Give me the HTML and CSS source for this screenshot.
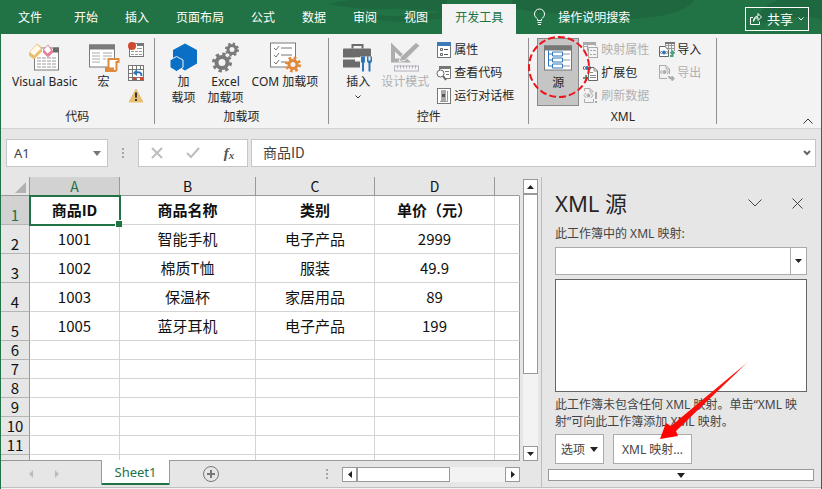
FILE: index.html
```html
<!DOCTYPE html>
<html lang="zh-CN">
<head>
<meta charset="utf-8">
<title>Excel - XML 源</title>
<link rel="stylesheet" href="styles.css">
</head>
<body>
<div class="app">
  <header class="topbar">
    <svg class="topbar-art" width="600" height="34" viewBox="0 0 600 34" aria-hidden="true">
      <g fill="#1d603b" opacity=".6">
        <path d="M106 4Q130 -2 150 0H225V12Q185 8 165 9Q135 10 106 4Z"/>
        <path d="M138 10Q160 20 200 14L222 12V18Q180 24 160 20Q145 18 138 10Z"/>
        <path d="M290 0H472Q462 15 420 18Q400 20 375 14Q330 16 290 8Z"/>
        <path d="M536 24Q536 6 556 0H600V20Q580 12 536 24Z"/>
      </g>
    </svg>
    <nav class="tabs">
      <a class="tab file" href="#">文件</a>
      <a class="tab" href="#">开始</a>
      <a class="tab" href="#">插入</a>
      <a class="tab" href="#">页面布局</a>
      <a class="tab" href="#">公式</a>
      <a class="tab" href="#">数据</a>
      <a class="tab" href="#">审阅</a>
      <a class="tab" href="#">视图</a>
      <a class="tab active" href="#">开发工具</a>
    </nav>
    <button class="tell-me">
      <svg width="13" height="18" viewBox="0 0 13 18" fill="none" stroke="#fff"><path d="M4.500 12.500V11C3 9.500 1.500 8.500 1.500 6A5 5 0 0 1 11.500 6C11.500 8.500 10 9.500 8.500 11V12.500ZM4.500 14.500H8.500M5 16.500H8"/></svg>
      操作说明搜索
    </button>
    <button class="share">
      <svg width="12" height="12" viewBox="0 0 12 12" fill="none" stroke="#fff"><path d="M3 4.500H.5V11.500H9.500V8.500M3.500 8.500Q4 4.500 8 4.500V7.500L11.500 4L8 .5V3Q3.500 3.500 3.500 8.500Z"/></svg>
      共享
      <svg width="6" height="4" viewBox="0 0 6 4" fill="none" stroke="#fff"><path d="M.5 .5L3 3L5.500 .5"/></svg>
    </button>
  </header>

  <section class="ribbon">
    <div class="group g-code">
      <div class="tools">
        <button class="big vb">
          <svg width="32" height="28" viewBox="0 0 32 28">
            <rect x="5.500" y="4.500" width="24" height="22" fill="#fff" stroke="#7b7b7b"/><path d="M24 4H30V9H24Z" fill="#6b6b6b"/>
            <path d="M8 14.500H27M8 17.500H27M8 20.500H27M8 23.500H27" stroke="#999" stroke-dasharray="4 1"/>
            <path d="M0 9L8 0L13 4V8L5 16L0 12Z" fill="#e9bf6b"/><path d="M1 8.500L8 1L12 5L5 12Z" fill="#fffaf0"/>
            <path d="M14 6L19 1L24 7V9L19 14L14 9Z" fill="#e6819b"/><path d="M15 6L19 2L22 7L18.500 10Z" fill="#fff"/>
          </svg>
          <span>Visual Basic</span>
        </button>
        <button class="big">
          <svg width="32" height="28" viewBox="0 0 32 28">
            <rect x="1.500" y="1.500" width="25" height="22" fill="#fff" stroke="#7b7b7b"/><path d="M1 1H27V6H1Z" fill="#7b7b7b"/>
            <path d="M4 9.500H12M15 9.500H24M4 12.500H12M15 12.500H24M4 15.500H12M15 15.500H18M4 18.500H12" stroke="#aaa"/>
            <path d="M20.500 15.500H30.500V18.500H28.500V26Q28 28 26 27.500H18V24.500H20.500Z" fill="#fff" stroke="#e08a3c" stroke-width="2"/><path d="M17 24H26V28H18Z" fill="#e08a3c"/>
          </svg>
          <span>宏</span>
        </button>
        <div class="small-stack">
          <button class="small" aria-label="录制宏"><svg width="16" height="16" viewBox="0 0 16 16"><rect x="1.500" y="1.500" width="14" height="13" fill="#fff" stroke="#777"/><path d="M9 1H16V4H9Z" fill="#777"/><path d="M3 9.500H6M7 9.500H10M11 9.500H14M3 12.500H6M7 12.500H10M11 12.500H14M9 6.500H14" stroke="#999"/><circle cx="4" cy="4" r="4" fill="#d1492e"/></svg></button>
          <button class="small" aria-label="使用相对引用"><svg width="16" height="16" viewBox="0 0 16 16"><rect x=".5" y=".5" width="15" height="15" fill="#fff" stroke="#777"/><path d="M0 4.500H16M4.500 0V16M8.500 0V4M12.500 0V4M0 8.500H4M0 12.500H16M8.500 12V16" stroke="#777"/><path d="M5 5H15V12H5Z" fill="#fff"/><path d="M13.500 11Q14 6 7 7.500" fill="none" stroke="#2f73b5" stroke-width="2"/><path d="M5 8L9 4V11Z" fill="#2f73b5"/><path d="M5 12H8V15H5ZM12 12H15V15H12Z" fill="#d1492e"/></svg></button>
          <button class="small" aria-label="宏安全性"><svg width="16" height="16" viewBox="0 0 16 16"><path d="M8 1L15 14H1Z" fill="#e9bf74" stroke="#e9bf74" stroke-linejoin="round"/><path d="M8 4.500V9.500M8 11V13" stroke="#333" stroke-width="2"/></svg></button>
        </div>
      </div>
      <h2>代码</h2>
    </div>

    <div class="group g-addins">
      <div class="tools">
        <button class="big addin">
          <svg width="28" height="28" viewBox="0 0 28 28"><path d="M15 0L27 6.500V20L15 27L3 20V6.500Z" fill="#0a70c6"/><path d="M6.500 13L13 16.500V24L6.500 28L0 24V16.500Z" fill="#0a70c6" stroke="#f3f3f3"/></svg>
          <span>加<br>载项</span>
        </button>
        <button class="big">
          <svg width="28" height="30" viewBox="0 0 28 30" fill="none" stroke="#7a7a7a"><circle cx="10" cy="20" r="5.500" stroke-width="4"/><circle cx="10" cy="20" r="8.500" stroke-width="3" stroke-dasharray="3.340 3.340"/><circle cx="20" cy="7" r="4" stroke-width="3"/><circle cx="20" cy="7" r="6" stroke-width="2" stroke-dasharray="2.360 2.360"/></svg>
          <span>Excel<br>加载项</span>
        </button>
        <button class="big">
          <svg width="32" height="30" viewBox="0 0 32 30" fill="none"><rect x="1.500" y=".5" width="25" height="24" fill="#fff" stroke="#7b7b7b"/><path d="M5 5.500L7 7.500L10 3.500M5 12.500L7 14.500L10 10.500M5 19.500L7 21.500L10 17.500M12 5.500H23M12 12.500H23M12 19.500H17" stroke="#777"/><circle cx="24" cy="22" r="7" fill="#f3f3f3"/><circle cx="24" cy="22" r="4" stroke="#e0883b" stroke-width="3"/><circle cx="24" cy="22" r="6.500" stroke="#e0883b" stroke-width="3" stroke-dasharray="2.550 2.550"/></svg>
          <span>COM 加载项</span>
        </button>
      </div>
      <h2>加载项</h2>
    </div>

    <div class="group g-controls">
      <div class="tools">
        <button class="big">
          <svg width="32" height="30" viewBox="0 0 32 30"><path d="M10.500 6V2.500H20.500V6" fill="none" stroke="#6c6c6c" stroke-width="2"/><path d="M1 7Q1 6 2 6H28Q29 6 29 7V15H1ZM1 17H13V19H19V17H24V25H1Z" fill="#6c6c6c"/><path d="M13 15H19V17H13Z" fill="#fff"/><path d="M18 14H32V30H18Z" fill="#f3f3f3"/><path d="M19 14H23V20H22V29H20V20H19ZM25 14H26.500V18H28.500V14H30V19L28.500 21V29H26.500V21L25 19Z" fill="#2f76b9"/></svg>
          <span>插入</span>
          <svg class="caret" width="6" height="4" viewBox="0 0 6 4" fill="none" stroke="#333"><path d="M.5 .5L3 3L5.500 .5"/></svg>
        </button>
        <button class="big" disabled>
          <svg width="32" height="30" viewBox="0 0 32 30"><path fill-rule="evenodd" d="M2 0L22 20H2ZM6 9V16H13Z" fill="#adadad"/><path d="M10 19L12 14L27 0L31 3L16 18Z" fill="#adadad" stroke="#f3f3f3"/><rect x="5.500" y="23.500" width="24" height="5" fill="#f6f3f8" stroke="#b5aebb"/><path d="M8.500 23V26M11.500 23V26M14.500 23V26M17.500 23V26M20.500 23V26M23.500 23V26M26.500 23V26" stroke="#b5aebb"/></svg>
          <span>设计模式</span>
        </button>
        <div class="small-stack">
          <button class="small"><svg width="16" height="16" viewBox="0 0 16 16" fill="none"><rect x="1.500" y=".5" width="13" height="15" fill="#fff" stroke="#777"/><path d="M1 0H15V4H1Z" fill="#3d7ab8"/><path d="M4.500 6.500H6.500V8.500H4.500ZM4.500 11.500H6.500V13.500H4.500Z" stroke="#666"/><path d="M8 7.500H12M8 12.500H12" stroke="#555"/></svg>属性</button>
          <button class="small"><svg width="16" height="16" viewBox="0 0 16 16" fill="none"><path d="M3.500 5V1.500H14.500V13.500H9" fill="#fff" stroke="#777"/><path d="M3 1H15V4H3Z" fill="#777"/><path d="M9 6.500H13M10 9.500H13" stroke="#777"/><circle cx="4.500" cy="8.500" r="3.500" fill="#fff" stroke="#666"/><path d="M7 11L10 15" stroke="#666" stroke-width="2"/></svg>查看代码</button>
          <button class="small"><svg width="16" height="16" viewBox="0 0 16 16" fill="none"><rect x="1.500" y=".5" width="13" height="15" fill="#fff" stroke="#777"/><path d="M5 2H10V13H5Z" fill="#aaa"/><path d="M6 6H9V9H6Z" fill="#555"/><path d="M4 13.500H11.500V3" stroke="#999"/></svg>运行对话框</button>
        </div>
      </div>
      <h2>控件</h2>
    </div>

    <div class="group g-xml">
      <div class="tools">
        <button class="big source">
          <svg width="28" height="26" viewBox="0 0 28 26" fill="none"><rect x=".5" y=".5" width="27" height="24" fill="#fff" stroke="#777"/><path d="M0 0H28V5H0Z" fill="#777"/><path d="M4.500 5V20.500H8M4.500 8.500H8M4.500 14.500H8" stroke="#2f76b9"/><path d="M8.500 6.500H18.500V10.500H8.500ZM8.500 12.500H18.500V16.500H8.500ZM8.500 18.500H18.500V22.500H8.500Z" stroke="#2f76b9"/><path d="M19 8.500H26M19 14.500H26M19 20.500H26" stroke="#999"/></svg>
          <span>源</span>
          <svg class="ring" width="64" height="64" viewBox="0 0 64 64" aria-hidden="true"><circle cx="32" cy="32" r="30" fill="none" stroke="#f0141c" stroke-width="2" stroke-dasharray="7 3"/></svg>
        </button>
        <div class="small-stack">
          <button class="small" disabled><svg width="16" height="16" viewBox="0 0 16 16" fill="none" stroke="#aaa"><path d="M.5 9V.5H12.500V4M.5 4.500H5M4.500 1V9" /><path d="M0 0H13V3H0Z" fill="#aaa" stroke="none"/><rect x="5.500" y="5.500" width="9" height="10" fill="#f3f3f3"/><path d="M7 8.500H9M10 8.500H13M7 12.500H9M10 12.500H13"/></svg>映射属性</button>
          <button class="small"><svg width="16" height="16" viewBox="0 0 16 16" fill="none"><path d="M5.500 2.500H11L14.500 6V15.500H5.500Z" fill="#fff" stroke="#666"/><path d="M7 7.500H10M7 10.500H13M7 12.500H13M11 3V6H14" stroke="#888"/><circle cx="4" cy="3" r="2" fill="#2f76b9"/><path d="M1.500 1L0 3L1.500 5M6.500 1L8 3L6.500 5" stroke="#555"/><path d="M3 10V16M0 13H6" stroke="#4d9f83" stroke-width="2"/></svg>扩展包</button>
          <button class="small" disabled><svg width="16" height="16" viewBox="0 0 16 16" fill="none" stroke="#aaa"><path d="M1.500 3V.5H7L10.500 4M1.500 11V14.500H10.500V11M7 1V4H10"/><path d="M3 5L1 7.500L3 10M8 5L10 7.500L8 10"/><circle cx="5.500" cy="7.500" r="1.500" fill="#aaa"/><path d="M13 4V11M13 13V15" stroke-width="2"/></svg>刷新数据</button>
        </div>
        <div class="small-stack">
          <button class="small"><svg width="16" height="16" viewBox="0 0 16 16" fill="none"><path d="M6.500 7V.5H15.500V9M6 3.500H15M6 6.500H15M9.500 0V7M12.500 0V9" stroke="#999"/><path d="M6 0H16V2H6Z" fill="#777"/><path d="M.5 4.500H6L9.500 8V14.500H.5Z" fill="#fff" stroke="#666"/><circle cx="5" cy="10.500" r="2" fill="#2f76b9"/><path d="M2.500 9L1.500 10.500L2.500 12M7.500 9L8.500 10.500L7.500 12" stroke="#777"/><path d="M11 14H13.500V10M11.500 11.500L13.500 9.500L15.500 11.500" stroke="#4d9f83" stroke-width="2"/></svg>导入</button>
          <button class="small" disabled><svg width="16" height="16" viewBox="0 0 16 16" fill="none" stroke="#aaa"><path d="M.5 .5H7L10.500 4V9M.5 0V13.500H8M7 1V4H10"/><path d="M3 5L1.500 7L3 9M8 5L9.500 7L8 9"/><circle cx="5.500" cy="7" r="1.500" fill="#aaa"/><path d="M10 11Q10 13.500 14 13.500M12.500 11.500L14.500 13.500L12.500 15.500" stroke-width="2"/></svg>导出</button>
        </div>
      </div>
      <h2>XML</h2>
    </div>
    <button class="collapse" aria-label="折叠功能区"><svg width="10" height="6" viewBox="0 0 10 6" fill="none" stroke="#333"><path d="M.5 5.500L5 1L9.500 5.500"/></svg></button>
  </section>

  <section class="formula-bar">
    <div class="name-box">
      <input type="text" value="A1" aria-label="名称框">
      <button aria-label="名称列表"><svg width="8" height="5" viewBox="0 0 8 5"><path d="M0 0H8L4 5Z" fill="#777"/></svg></button>
    </div>
    <svg class="dots" width="2" height="11" viewBox="0 0 2 11" fill="#a6a6a6"><path d="M0 0H2V2H0ZM0 4H2V6H0ZM0 8H2V10H0Z"/></svg>
    <div class="fx-box">
      <button aria-label="取消"><svg width="12" height="12" viewBox="0 0 12 12" stroke="#bdbdbd" stroke-width="2"><path d="M1 1L11 11M11 1L1 11"/></svg></button>
      <button aria-label="输入"><svg width="14" height="12" viewBox="0 0 14 12" fill="none" stroke="#bdbdbd" stroke-width="2"><path d="M1 6L5 10L13 1"/></svg></button>
      <button class="fx" aria-label="插入函数">f<sub>x</sub></button>
    </div>
    <div class="formula">
      <input type="text" value="商品ID" aria-label="编辑栏">
      <button aria-label="展开编辑栏"><svg width="8" height="6" viewBox="0 0 8 6" fill="none" stroke="#666" stroke-width="2"><path d="M1 1L4 4L7 1"/></svg></button>
    </div>
  </section>

  <main class="work">
    <div class="book">
      <div class="sheet-row">
        <div class="sheet">
          <table>
            <colgroup><col class="c-head"><col class="c-a"><col class="c-b"><col class="c-c"><col class="c-d"><col></colgroup>
            <thead><tr><th class="corner"><svg width="11" height="11" viewBox="0 0 11 11"><path d="M11 0V11H0Z" fill="#b2b2b2"/></svg></th><th class="on">A</th><th>B</th><th>C</th><th>D</th><th></th></tr></thead>
            <tbody>
              <tr class="data title"><th class="on">1</th><td class="selected">商品ID</td><td>商品名称</td><td>类别</td><td>单价（元）</td><td></td></tr>
              <tr class="data"><th>2</th><td>1001</td><td>智能手机</td><td>电子产品</td><td>2999</td><td></td></tr>
              <tr class="data"><th>3</th><td>1002</td><td>棉质T恤</td><td>服装</td><td>49.9</td><td></td></tr>
              <tr class="data"><th>4</th><td>1003</td><td>保温杯</td><td>家居用品</td><td>89</td><td></td></tr>
              <tr class="data"><th>5</th><td>1005</td><td>蓝牙耳机</td><td>电子产品</td><td>199</td><td></td></tr>
              <tr><th>6</th><td></td><td></td><td></td><td></td><td></td></tr>
              <tr><th>7</th><td></td><td></td><td></td><td></td><td></td></tr>
              <tr><th>8</th><td></td><td></td><td></td><td></td><td></td></tr>
              <tr><th>9</th><td></td><td></td><td></td><td></td><td></td></tr>
              <tr><th>10</th><td></td><td></td><td></td><td></td><td></td></tr>
              <tr><th>11</th><td></td><td></td><td></td><td></td><td></td></tr>
              <tr><th></th><td></td><td></td><td></td><td></td><td></td></tr>
            </tbody>
          </table>
        </div>
        <div class="vscroll">
          <button aria-label="向上滚动"><svg width="7" height="4" viewBox="0 0 7 4"><path d="M0 4H7L3.500 0Z" fill="#222"/></svg></button>
          <div class="thumb"></div>
          <button aria-label="向下滚动"><svg width="7" height="4" viewBox="0 0 7 4"><path d="M0 0H7L3.500 4Z" fill="#222"/></svg></button>
        </div>
      </div>
      <div class="sheet-tabs">
        <button class="nav" aria-label="上一张"><svg width="4" height="8" viewBox="0 0 4 8"><path d="M4 0V8L0 4Z" fill="#bbb"/></svg></button>
        <button class="nav" aria-label="下一张"><svg width="4" height="8" viewBox="0 0 4 8"><path d="M0 0V8L4 4Z" fill="#bbb"/></svg></button>
        <button class="sheet-tab">Sheet1</button>
        <button class="add" aria-label="新工作表"><svg width="16" height="16" viewBox="0 0 16 16" fill="none" stroke="#777"><circle cx="8" cy="8" r="7.500"/><path d="M8 4V12M4 8H12" stroke-width="2"/></svg></button>
        <svg class="dots" width="2" height="11" viewBox="0 0 2 11" fill="#a6a6a6"><path d="M0 0H2V2H0ZM0 4H2V6H0ZM0 8H2V10H0Z"/></svg>
        <div class="hscroll">
          <button aria-label="向左滚动"><svg width="4" height="7" viewBox="0 0 4 7"><path d="M4 0V7L0 3.500Z" fill="#222"/></svg></button>
          <div class="thumb"></div>
          <button aria-label="向右滚动"><svg width="4" height="7" viewBox="0 0 4 7"><path d="M0 0V7L4 3.500Z" fill="#222"/></svg></button>
        </div>
      </div>
    </div>

    <aside class="pane">
      <div class="pane-head">
        <h1>XML 源</h1>
        <button aria-label="任务窗格选项"><svg width="14" height="8" viewBox="0 0 14 8" fill="none" stroke="#444"><path d="M.5 .5L7 7L13.500 .5"/></svg></button>
        <button aria-label="关闭"><svg width="11" height="11" viewBox="0 0 11 11" fill="none" stroke="#444"><path d="M.5 .5L10.500 10.500M10.500 .5L.5 10.500"/></svg></button>
      </div>
      <label for="maps">此工作簿中的 XML 映射:</label>
      <div class="combo">
        <select id="maps"><option></option></select>
        <span class="combo-arrow"><svg width="7" height="4" viewBox="0 0 7 4"><path d="M0 0H7L3.500 4Z" fill="#222"/></svg></span>
      </div>
      <div class="tree"></div>
      <p>此工作簿未包含任何 XML 映射。单击“XML 映射”可向此工作簿添加 XML 映射。</p>
      <div class="actions">
        <button>选项 <svg width="8" height="5" viewBox="0 0 8 5"><path d="M0 0H8L4 5Z" fill="#222"/></svg></button>
        <button class="map-button">XML 映射...
          <svg class="pointer" width="90" height="79" viewBox="0 0 90 79" aria-hidden="true"><defs><linearGradient id="fade" x1="1" y1="0" x2="0" y2="1"><stop offset="0" stop-color="#ff2a20" stop-opacity=".4"/><stop offset=".15" stop-color="#f81a12"/><stop offset="1" stop-color="#ff0000"/></linearGradient></defs><path d="M89 0L11 65L6 62L0 78L18 75L16 70Z" fill="url(#fade)"/></svg>
        </button>
      </div>
      <button class="more" aria-label="向下滚动窗格"><svg width="8" height="5" viewBox="0 0 8 5"><path d="M0 0H8L4 5Z" fill="#222"/></svg></button>
    </aside>
  </main>
  <footer class="status"></footer>
</div>
</body>
</html>
```

FILE: styles.css
```css
* { box-sizing: border-box; }

body {
  margin: 0;
  font: 12px/15px "Noto Sans", "Noto Sans CJK SC", sans-serif;
  color: #262626;
}

button, input, select {
  margin: 0;
  padding: 0;
  border: 0;
  background: none;
  font: inherit;
  color: inherit;
  border-radius: 0;
}

h1, h2, p { margin: 0; font-weight: 400; }
svg { display: block; flex: none; }
button { display: flex; align-items: center; justify-content: center; }

.app {
  display: flex;
  flex-direction: column;
  min-height: 100vh;
  background: #e6e6e6;
  border: solid #217346;
  border-width: 0 1px;
}

/* Title bar */
.topbar {
  position: relative;
  display: flex;
  height: 34px;
  margin: 0 -1px;
  padding: 0 13px 0 5px;
  background: #217346;
  color: #fff;
}
.topbar-art { position: absolute; right: 0; top: 0; }
.tabs { display: flex; gap: 1px; padding-top: 4px; position: relative; }
.tab {
  display: flex;
  align-items: center;
  padding: 0 13px 3px;
  color: #fff;
  text-decoration: none;
}
.tab.file { margin-right: 5px; }
.tab.active { background: #f3f3f3; color: #217346; }
.tell-me { position: relative; gap: 12px; margin-left: 17px; }
.share {
  position: relative;
  align-self: center;
  gap: 5px;
  height: 24px;
  margin: 4px 0 0 auto;
  padding: 0 4px;
  border: 1px solid #fff;
  font-size: 13px;
}

/* Ribbon */
.ribbon {
  display: flex;
  padding-top: 4px;
  background: #f3f3f3;
  border-bottom: 1px solid #d2d2d2;
}
.group {
  display: flex;
  flex-direction: column;
  height: 86px;
  margin-bottom: 4px;
  border-right: 1px solid #8f8f8f;
}
.group h2 { font-size: 12px; line-height: 14px; text-align: center; }
.tools { display: flex; flex: 1; align-items: flex-start; }
.big {
  position: relative;
  flex-direction: column;
  justify-content: flex-start;
  padding-top: 3px;
  white-space: nowrap;
}
.big span { line-height: 16px; }
.big > svg:first-child { height: 33px; }
.big .caret { margin-top: 5px; }
.big.vb { padding-left: 2px; padding-right: 2px; }
.big.addin { width: 32px; }
.small-stack { display: flex; flex-direction: column; }
.small { height: 23px; gap: 2px; justify-content: flex-start; white-space: nowrap; }
button:disabled { color: #b1b1b1; }

.g-code .tools { padding: 0 10px 0 9px; gap: 8px; }
.g-addins .tools { padding: 0 10px 0 13px; gap: 8px; }
.g-controls .tools { padding: 0 14px 0 13px; gap: 7px; }
.g-xml .tools { padding: 0 15px 0 8px; gap: 4px; }
.g-xml .small-stack:last-child { margin-left: 6px; }
.source {
  width: 42px;
  height: 68px;
  background: #c5c5c5;
  border: 1px solid #8a8a8a;
}
.ring { position: absolute; left: -11px; top: -4px; z-index: 2; }
.collapse { margin-left: auto; align-self: flex-end; padding: 4px 8px; }

/* Formula bar */
.formula-bar {
  display: flex;
  align-items: center;
  padding: 10px 5px;
}
.name-box, .fx-box, .formula {
  display: flex;
  height: 28px;
  background: #fff;
  border: 1px solid #c6c6c6;
}
.name-box { width: 102px; font-size: 13px; color: #444; }
.name-box input { flex: 1; min-width: 0; padding-left: 7px; }
.name-box button { width: 20px; }
.formula-bar .dots { margin: 0 14px; }
.fx-box { width: 110px; }
.fx-box button { flex: 1; }
.fx-box .fx { font: italic bold 15px/20px "Liberation Serif", serif; color: #555; }
.fx sub { font-size: 11px; line-height: 1; vertical-align: 0; align-self: flex-end; margin-bottom: 5px; }
.formula { flex: 1; margin-left: 3px; font: 14px/20px "Noto Sans CJK SC", sans-serif; color: #444; }
.formula input { flex: 1; min-width: 0; padding: 0 0 3px 11px; }
.formula button { width: 16px; }

/* Workbook */
.work { display: flex; flex: 1; }
.book { display: flex; flex-direction: column; flex: 1; min-width: 0; }
.sheet-row { display: flex; }
.sheet {
  flex: 1;
  min-width: 0;
  height: 284px;
  overflow: hidden;
  border: solid #999;
  border-width: 0 0 1px;
}
table {
  width: 100%;
  table-layout: fixed;
  border-collapse: separate;
  border-spacing: 0;
  font: 15px/18px "Noto Sans CJK SC", sans-serif;
  color: #111;
}
.c-head { width: 29px; }
.c-a { width: 90px; }
.c-b { width: 136px; }
.c-c { width: 119px; }
.c-d { width: 120px; }
th, td { padding: 0; height: 19px; border: solid #d4d4d4; border-width: 0 1px 1px 0; text-align: center; }
th { background: #e6e6e6; font-size: 14px; font-weight: 400; }
td { background: #fff; }
td:last-child { border-right-color: #999; }
thead th { border-color: #999; }
thead th:last-child { border-right-color: #e6e6e6; }
tbody th { border-color: #b5b5b5; border-right-color: #999; vertical-align: bottom; font-size: 15px; }
.data th, .data td { height: 29px; }
.title td { font-weight: 700; }
th.on { background: #d2d2d2; color: #217346; }
.corner svg { margin: 2px 3px 0 auto; }
.selected { position: relative; outline: 2px solid #217346; outline-offset: -1px; }
.selected::after {
  content: "";
  position: absolute;
  right: -3px;
  bottom: -3px;
  width: 6px;
  height: 6px;
  background: #217346;
  border: solid #fff;
  border-width: 1px 0 0 1px;
}

.vscroll, .hscroll { display: flex; background: #f3f3f3; }
.vscroll { flex-direction: column; width: 15px; margin: 2px 3px 0; }
.vscroll button, .hscroll button { width: 15px; height: 15px; background: #fff; border: 1px solid #999; }
.thumb { background: #fff; border: 1px solid #999; }
.vscroll .thumb { flex: 0 0 180px; }
.vscroll button:last-child { margin-top: auto; }

.sheet-tabs { display: flex; align-items: flex-start; padding: 0 21px 0 26px; height: 26px; }
.nav { width: 28px; height: 26px; justify-content: flex-start; }
.nav:first-child { padding-left: 2px; }
.sheet-tab {
  width: 69px;
  height: 25px;
  margin: -1px 0 0 18px;
  background: #fff;
  border: solid #999;
  border-width: 0 1px;
  box-shadow: inset 0 -2px #217346;
  color: #217346;
  font-size: 13px;
}
.add { margin: 5px 0 0 33px; }
.sheet-tabs .dots { margin: 8px 14px 0 auto; }
.hscroll { width: 178px; margin-top: 6px; }
.hscroll .thumb { flex: 0 0 93px; }
.hscroll button:last-child { margin-left: auto; }

/* Task pane */
.pane {
  display: flex;
  flex-direction: column;
  width: 280px;
  padding: 10px 14px 6px 13px;
  border-left: 1px solid #bdbdbd;
  color: #444;
}
.pane-head { display: flex; align-items: center; gap: 30px; height: 32px; padding-right: 4px; }
.pane-head h1 { flex: 1; font-size: 22px; line-height: 32px; color: #262626; }
.pane label { margin: 7px 0 5px; line-height: 16px; }
.combo { position: relative; display: flex; height: 28px; }
.combo select { flex: 1; appearance: none; background: #fff; border: 1px solid #ababab; }
.combo-arrow {
  position: absolute;
  right: 1px;
  top: 1px;
  bottom: 1px;
  display: flex;
  align-items: center;
  width: 16px;
  padding-left: 4px;
  border-left: 1px solid #ababab;
  pointer-events: none;
}
.tree { height: 113px; margin-top: 4px; background: #fff; border: 1px solid #666; }
.pane p { margin: 4px 0; line-height: 17px; }
.actions { display: flex; gap: 9px; }
.actions button { height: 30px; gap: 5px; padding: 0 5px; background: #fff; border: 1px solid #ababab; white-space: nowrap; }
.actions .map-button { position: relative; padding: 0 8px; }
.pointer { position: absolute; left: 46px; top: -74px; z-index: 2; }
.more { height: 12px; margin: 5px -7px 0; background: #fff; border: 1px solid #999; }

.status { height: 2px; background: #f3f3f3; border-top: 1px solid #c0c0c0; }
```
